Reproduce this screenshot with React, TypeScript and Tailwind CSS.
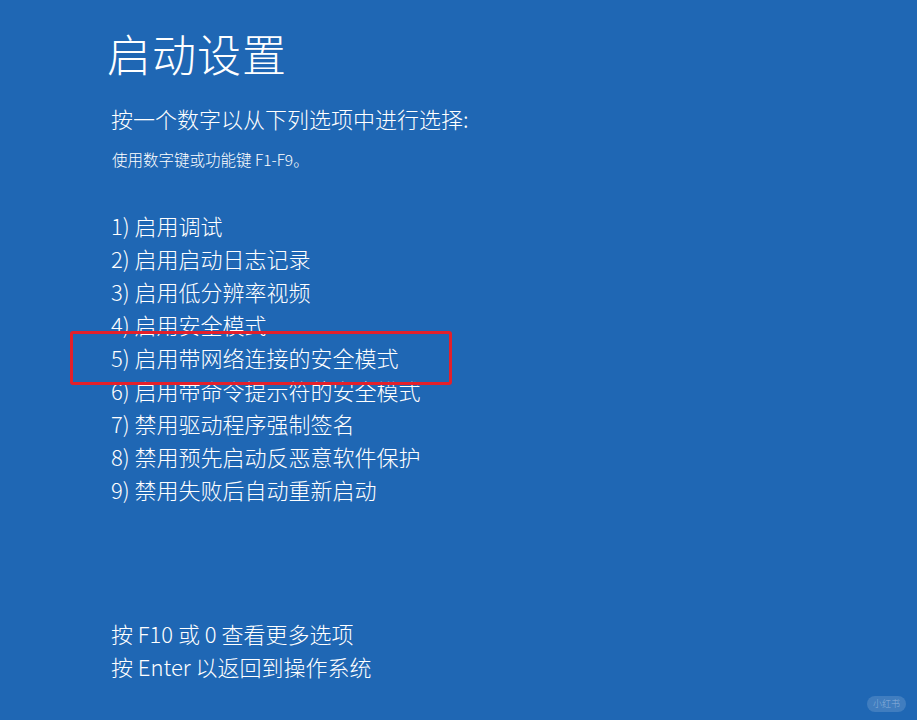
const options = [
  '1) 启用调试',
  '2) 启用启动日志记录',
  '3) 启用低分辨率视频',
  '4) 启用安全模式',
  '5) 启用带网络连接的安全模式',
  '6) 启用带命令提示符的安全模式',
  '7) 禁用驱动程序强制签名',
  '8) 禁用预先启动反恶意软件保护',
  '9) 禁用失败后自动重新启动',
]

export default function App() {
  return (
    <div
      className="relative w-[917px] h-[720px] overflow-hidden bg-[#1f67b4] text-white font-light"
      style={{ fontFamily: '"Noto Sans CJK SC", "Noto Sans", sans-serif' }}
    >
      <div className="pl-[107px] pt-[24px]">
        <h1 className="text-[44px] leading-[58px] font-light tracking-[1px]">启动设置</h1>
        <p className="mt-[22px] pl-[4px] text-[22px] leading-[28px]">按一个数字以从下列选项中进行选择:</p>
        <p className="mt-[17px] pl-[5px] text-[15.5px] leading-[20px]">使用数字键或功能键 F1-F9。</p>
        <div className="mt-[40px] pl-[4px] flex flex-col">
          {options.map((o) => (
            <div key={o} className="text-[22px] leading-[33px] h-[33px]">
              {o}
            </div>
          ))}
        </div>
        <div className="mt-[111px] pl-[4px] flex flex-col">
          <div className="text-[22px] leading-[33px]">按 F10 或 0 查看更多选项</div>
          <div className="text-[22px] leading-[33px]">按 Enter 以返回到操作系统</div>
        </div>
      </div>

      {/* highlight box drawn over option 5 */}
      <div className="absolute left-[70px] top-[331px] w-[382px] h-[54px] border-[3px] border-[#e3202b] rounded-[3px]" />

      <div className="absolute right-[11px] bottom-[8px] px-[6px] h-[16px] rounded-full bg-white/15 text-[9px] leading-[16px] text-white/40">
        小红书
      </div>
    </div>
  )
}
